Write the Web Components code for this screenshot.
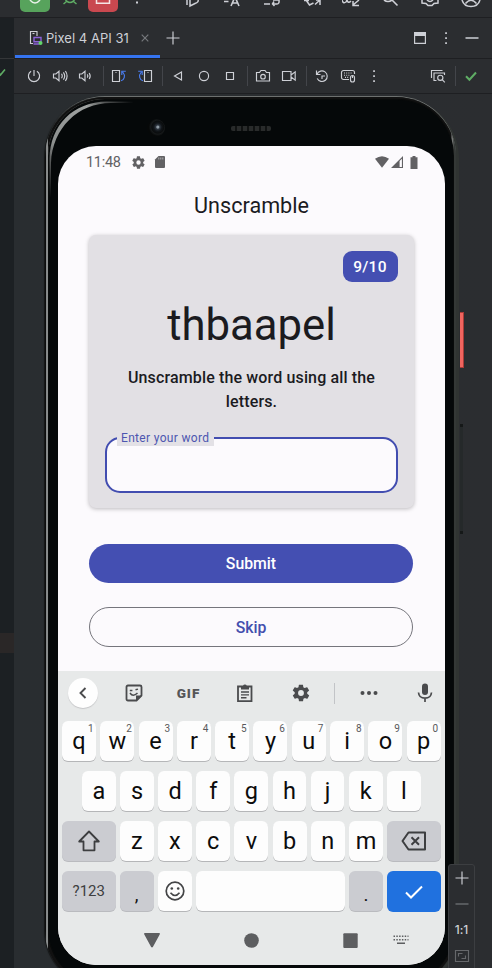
<!DOCTYPE html>
<html lang="en">
<head>
<meta charset="utf-8">
<title>Pixel 4 API 31</title>
<style>
html,body{margin:0;height:100%;background:#2b2d30;overflow:hidden}
body{font-family:Roboto,"Liberation Sans",sans-serif}
</style>
</head>
<body>
<emulator-window></emulator-window>
<script>
const s = (w,h,body)=>`<svg width="${w}" height="${h}" viewBox="0 0 ${w} ${h}" fill="none" stroke="currentColor" stroke-width="1.15">${body}</svg>`;
const gear = 'M19.4 13c0-.3.1-.6.1-1s0-.7-.1-1l2.1-1.6c.2-.1.2-.4.1-.6l-2-3.5c-.1-.2-.4-.3-.6-.2l-2.5 1c-.5-.4-1.1-.7-1.7-1l-.4-2.6c0-.3-.2-.5-.5-.5h-4c-.2 0-.4.2-.5.4l-.4 2.7c-.6.2-1.1.6-1.7 1l-2.4-1c-.3-.1-.5 0-.7.2l-2 3.5c-.1.2 0 .5.2.6L4.500 11c0 .3-.1.700-.1 1s0 .7.1 1l-2.1 1.600c-.2.2-.3.400-.1.700l2 3.400c.1.300.4.400.6.300l2.500-1c.5.400 1.100.700 1.700 1l.4 2.600c0 .3.2.400.5.400h4c.2 0 .5-.2.5-.4l.4-2.600c.6-.3 1.100-.6 1.700-1l2.500 1c.2.1.5 0 .6-.2l2-3.500c.1-.2.1-.5-.1-.6zM12 15.500a3.500 3.500 0 1 1 0-7 3.500 3.500 0 0 1 0 7z';
const ICONS = {
  power:s(16,16,'<path d="M8 2v6M5.100 3.300a5.600 5.600 0 1 0 5.800 0"/>'),
  volup:s(16,16,'<path d="M1.500 6v4h2.300L7 12.700V3.300L3.800 6zM9.500 5.800q1.500 2.200 0 4.400M11.400 4.300q2.600 3.700 0 7.400M13.400 3q3.400 5 0 10"/>'),
  voldown:s(16,16,'<path d="M2.500 6v4h2.300L8 12.700V3.300L4.800 6zM10.300 6.300q1.200 1.700 0 3.400M12.200 5q2 3 0 6"/>'),
  rotl:s(16,16,'<path d="M1.500 2.500h7v11h-7zM4.500 4.500h1"/><path stroke="#4a7df0" d="M10 12.800c3.500-.8 4.700-5.300 1.700-8.800M10.800 7V3.200h4"/>'),
  rotr:s(16,16,'<path d="M7.500 2.500h7v11h-7zM10.500 4.500h1"/><path stroke="#4a7df0" d="M6 12.800C2.500 12 1.300 7.500 4.300 4M5.200 7V3.200h-4"/>'),
  back:s(16,16,'<path d="M11.500 4v8L4.500 8z"/>'),
  home:s(16,16,'<circle cx="8" cy="8" r="4.600"/>'),
  recent:s(16,16,'<path d="M4.500 4.500h7v7h-7z"/>'),
  camera:s(16,16,'<path d="M1.500 4.500h3l1.500-2h4l1.500 2h3v8.500h-13z"/><circle cx="8" cy="8.700" r="2.300"/>'),
  video:s(16,16,'<path d="M1.500 3.500h8.500v9H1.500zM10 7l4.200-3.200v8.400L10 9"/>'),
  history:s(16,16,'<path d="M2.500 2.500v4h4M3 6.200a5.300 5.300 0 1 1 .2 4.400M8 11V8h3"/>'),
  keymouse:s(16,16,'<path d="M9 11.500H3.500a2 2 0 0 1-2-2v-5a2 2 0 0 1 2-2h9a2 2 0 0 1 2 2V6"/><path stroke-dasharray="1 1.200" d="M4 5h8.500M4 7.200h6M5 9.400h4"/><rect x="10.500" y="7.500" width="4" height="6.500" rx="2"/><path d="M12.500 8v2"/>'),
  dots:s(16,16,'<path fill="currentColor" stroke="none" d="M7.200 2.200h1.700v1.700H7.200zM7.200 7.200h1.700v1.700H7.200zM7.200 12.200h1.700v1.700H7.200z"/>'),
  inspect:s(16,16,'<path d="M1.500 10V2.500h11M6.500 12.500H4v-7.500h10.500V7"/><circle cx="10.300" cy="9.800" r="2.600"/><path d="M12.200 11.700l2.600 2.600"/>'),
  check:s(16,16,'<path stroke="#5fad65" stroke-width="2" d="M3 8.300l3.400 3.400L13 4.500"/>'),
  device:s(16,16,'<path d="M5 13.500H2.500v-12H9V6"/><path d="M4.500 3.500h2"/><path stroke="#8c62d8" stroke-width="1.400" d="M6 7.500h7v4.200H6zM5.500 14h6"/><circle cx="12.500" cy="13" r="2" fill="#62d66a" stroke="none"/>'),
  close:s(16,16,'<path stroke="#77797d" d="M4.700 4.700l6.600 6.600M11.300 4.700l-6.600 6.600"/>'),
  plus:s(16,16,'<path d="M8 1.500v13M1.500 8h13"/>'),
  windowed:s(16,16,'<path fill="currentColor" stroke="none" d="M2 2h12v4H2z"/><path d="M2.600 3h10.800v10.400H2.600z"/>'),
  minus:s(16,16,'<path stroke-width="1.500" d="M1.500 8h13"/>'),
  fit:s(16,16,'<path stroke="#66686b" d="M1.500 2.500h13v11h-13zM4.500 8.500V5.500h4M11.500 7.500v3h-4"/>'),
  /* top-bar glyphs, of which only the lower edge is visible */
  run:s(30,12,'<path fill="#57a35c" stroke="none" d="M0 0h30v7a5 5 0 0 1-5 5H5a5 5 0 0 1-5-5z"/><path stroke="#e8f0e8" stroke-width="1.500" d="M10 0q5 6 10 0"/>'),
  stop:s(30,12,'<path fill="#c9484f" stroke="none" d="M0 0h30v7a5 5 0 0 1-5 5H5a5 5 0 0 1-5-5z"/><path stroke="#f5e5e5" stroke-width="1.500" d="M8.500 0v3.200h13V0"/>'),
  bug:s(16,8,'<path stroke="#5fad65" stroke-width="1.500" d="M3.500 0q4.500 5 9 0M1.500 4l3-2.500M14.500 4l-3-2.500"/>'),
  tdot:s(16,8,'<path stroke="none" fill="currentColor" d="M7 1.500h2v2H7z"/>'),
  tplay:s(16,8,'<path stroke-width="1.500" d="M2 0v5M5 0v6l5-2.500q4-1.500 3-3.500M5 6V0"/>'),
  trans:s(16,8,'<path stroke-width="1.600" d="M0 1.500h4.500M7 6l3.500-8h1L15 6M8.500 3h5"/>'),
  wrap:s(16,8,'<path stroke-width="1.500" d="M0 4h6M9 4h4q2.500 0 2-4H9M10 1.500L8.500 4l2 2"/>'),
  swap:s(18,8,'<path stroke-width="1.500" d="M0 .5h5M2 0l3.500 5 4-2M11 4.500L16 0M16 5V0h-4"/>'),
  pull:s(18,8,'<path stroke-width="1.500" d="M0 0q1 4 4 2l1-2q1 4 4 1M17 0l-6 5M11 1v4.500h6"/>'),
  search:s(16,8,'<path stroke-width="1.600" d="M1 0q4 3 8 0M9 0l5.500 5.500"/>'),
  cog:s(18,8,'<path stroke-width="1.500" d="M1 0v3l4 .5L7 5.500h4L13 3.500l4-.5V0M6 0q3 3 6 0"/>'),
  user:s(20,8,'<path stroke-width="1.500" d="M1 0q2 6.500 9 6.500T19 0M4.500 3.500Q10-3 15.500 3.500"/>'),
  /* android glyphs */
  gear:`<svg width="100%" height="100%" viewBox="0 0 24 24" fill="currentColor"><path fill-rule="evenodd" d="${gear}"/></svg>`,
  sd:s(12,14,'<path fill="currentColor" stroke="none" d="M4.500 1H10q1 0 1 1v10q0 1-1 1H2q-1 0-1-1V4.500z"/><path stroke="#fcfafd" stroke-width=".5" d="M4.800 2.500v2M6.800 2.500v2M8.800 2.500v2"/>'),
  wifi:s(14,12,'<path fill="currentColor" stroke="none" d="M0 2.800Q7-2.300 14 2.800L7 11.700z"/>'),
  signal:s(12,12,'<path fill="currentColor" stroke="none" d="M0 12L12 0v12zM8.600 5v6h2.300V2.800z" fill-rule="evenodd"/>'),
  battery:s(8,13,'<path fill="currentColor" stroke="none" d="M2.500 0h3v1.200H7.500V13H.5V1.200h2z"/>'),
  chev:s(10,14,'<path stroke-width="1.900" d="M7.500 2L2.500 7l5 5"/>'),
  sticker:s(18,18,'<path stroke-width="1.800" stroke-linejoin="round" d="M3 1.500h12q1.500 0 1.500 1.500v8.500l-5 5H3Q1.500 16.500 1.500 15V3Q1.500 1.500 3 1.500z"/><path stroke="none" fill="currentColor" d="M11 17v-5.500h6z"/><path stroke-width="1.500" d="M4.800 6.500h2.600M10.500 5.800l2.500-.7M5 9q3 4.500 7.500 0"/>'),
  clip:s(18,20,'<path stroke-width="1.800" d="M2 3.500h13.500v14.700H2z"/><path fill="currentColor" stroke="none" d="M5 3h2a2 2 0 0 1 3.800 0H13v3.500H5z"/><path stroke-width="1.400" d="M5 9h8M5 11.900h8M5 14.800h5.500"/>'),
  more:s(18,6,'<g fill="currentColor" stroke="none"><circle cx="2.500" cy="3" r="2"/><circle cx="9" cy="3" r="2"/><circle cx="15.500" cy="3" r="2"/></g>'),
  mic:s(16,20,'<rect x="5" y="0.500" width="6" height="11.500" rx="3" fill="currentColor" stroke="none"/><path stroke-width="1.700" d="M1.500 9.500q.5 5.700 6.500 5.700t6.500-5.700M8 15v4"/>'),
  shift:s(24,22,'<path stroke-width="1.800" stroke-linejoin="round" d="M12 1.500L2.200 11.500H6.500v8.800h11v-8.800h4.300z"/>'),
  bksp:s(26,20,'<path stroke-width="2" stroke-linejoin="round" d="M7.500 1.500H24v17H7.500L1.500 10z"/><path stroke-width="2" d="M10.500 6.200l7.500 7.500M18 6.200l-7.500 7.500"/>'),
  smile:s(20,20,'<circle cx="10" cy="10" r="8.800" stroke-width="1.700"/><g fill="currentColor" stroke="none"><circle cx="6.800" cy="7.500" r="1.300"/><circle cx="13.200" cy="7.500" r="1.300"/></g><path stroke-width="1.600" d="M5.500 11.800q4.500 5.500 9 0"/>'),
  enter:s(18,14,'<path stroke="#fff" stroke-width="2" d="M1 7.500l5 5L17 1.500"/>'),
  navback:s(16,15,'<path fill="currentColor" stroke="none" d="M1 0h14q1.500 0 .7 1.400L9 13.800q-1 1.400-2 0L.3 1.400Q-.5 0 1 0z"/>'),
  navhome:s(15,15,'<circle cx="7.500" cy="7.500" r="7.300" fill="currentColor" stroke="none"/>'),
  navrec:s(15,15,'<rect x=".3" y=".3" width="14.400" height="14.700" rx="1" fill="currentColor" stroke="none"/>'),
  navkbd:s(16,10,'<path stroke-width="1.500" stroke-dasharray="1.500 1.300" d="M.5 1.200h15M.5 4.700h15"/><path stroke-width="1.600" d="M4 8.300h8"/>')
};
function def(name, css, html){
  customElements.define(name, class extends HTMLElement{
    constructor(){
      super();
      const t=document.createElement('template');
      t.innerHTML=`<style>*{box-sizing:border-box}svg{display:block}${css}</style>${html}`;
      this.attachShadow({mode:'open'}).appendChild(t.content.cloneNode(true));
    }
  });
}
const icon=(n,st='')=>`<ui-icon name="${n}" style="${st}"></ui-icon>`;
customElements.define('ui-icon', class extends HTMLElement{
  connectedCallback(){
    if(this.shadowRoot) return;
    this.attachShadow({mode:'open'}).innerHTML='<style>:host{display:block;flex:none}svg{display:block;overflow:hidden}</style>'+ICONS[this.getAttribute('name')];
  }
});

def('ide-topbar',`:host{display:grid;grid-template-columns:20px 30px 7px 26px 5px 30px 38px 43px 38px 40px 38px 42px 39px 38px 48px;
  height:18px;border-bottom:1px solid #1e1f22;color:#ced0d6;background:#2b2d30;justify-items:center;align-items:start}`,
  `<i></i>${icon('run')}<i></i>${icon('bug')}<i></i>${icon('stop')}${icon('tdot')}${icon('tplay','margin-left:30px')}${icon('trans','margin-left:28px')}${icon('wrap','margin-left:29px')}${icon('swap','margin-left:34px')}${icon('pull','margin-left:29px')}${icon('search','margin-left:29px')}${icon('cog','margin-left:30px')}${icon('user','margin-left:26px')}`);

def('ide-tabbar',`:host{display:flex;height:41px;border-bottom:1px solid #1e1f22;color:#ced0d6;align-items:stretch}
 .tab{width:145px;margin-left:1px;display:flex;align-items:center;border-bottom:3px solid #3574f0;padding:2px 0 0 13px;font:13px Inter,sans-serif;letter-spacing:.03px}
 .tab span{margin-left:2px;flex:1;white-space:nowrap}
 .right{margin-left:auto;display:flex;align-items:center;gap:10px;padding-right:12px}`,
 `<div class="tab">${icon('device')}<span>Pixel 4 API 31</span>${icon('close','margin-right:7px')}</div>${icon('plus','margin:12px 0 0 5px')}
 <div class="right">${icon('windowed')}${icon('dots')}${icon('minus')}</div>`);

def('ide-toolbar',`:host{display:flex;height:35px;border-bottom:1px solid #1e1f22;color:#ced0d6;align-items:center;gap:10px;padding:0 13px 0 12px}
 i{width:1px;height:20px;background:#43454a;margin:0 -3px 0 -1px}b{flex:1}`,
 ['power','volup','voldown','|','rotl','rotr','|','back','home','recent','|','camera','video','|','history','keymouse','dots','_','inspect','|','check'].map(n=>n==='|'?'<i></i>':n==='_'?'<b></b>':icon(n,n==='voldown'?'transform:translateX(-1px)':'')).join(''));

def('zoom-panel',`:host{display:flex;flex-direction:column;align-items:center;width:27px;height:110px;background:#2b2d30;border:1px solid #3c3e41;color:#ced0d6;
 font:500 12px Inter,sans-serif;padding-top:5px;gap:10px;border-radius:3px}span{line-height:16px;letter-spacing:-.1px}`,
 `${icon('plus')}${icon('minus','color:#66686b')}<span>1:1</span>${icon('fit')}`);

def('phone-frame',`:host{display:block;position:relative;width:411px;height:890px}
 .rim{height:100%;border-radius:60px 60px 56px 56px;background:linear-gradient(90deg,#0b0c0c 0,#0b0c0c 1px,#858888 1.500px,#8a8d8d 2.500px,#111 3.500px,#111 405px,#111 406px,#858786 407px,#656866 408px,#343836 409px,#343836 411px);padding:2px 3px 3px 3px;box-shadow:-1px 0 1px #141616,0 -1px 0 #777b79,3px 1px 0 #303432}
 .glint{height:100%;border-radius:57px 57px 54px 54px;background:linear-gradient(115deg,#8d908f 0,#6b6d6c 60px,#2b2c2c 110px,#050707 160px);padding:1px 0 0 1px}
 .body{height:100%;border-radius:56px 56px 54px 54px;background:#050809;padding:46px 6px 0 9px;box-shadow:0 0 0 1px #090b0b}
 .shine{position:absolute;left:0;top:0}
 .top{position:absolute;left:102px;top:20px;width:130px;height:22px;display:flex;align-items:center;justify-content:space-between}
 .lens{width:18px;height:18px;border-radius:50%;background:radial-gradient(circle at 60% 45%,#8e9aa3 0 1px,#303842 2px,#111519 4px,#0a0c0d 6px,#16191a 7px,#060808 9px)}
 .spk{width:40px;height:5px;margin:0 6px 0 0;border-radius:2px;background:repeating-linear-gradient(90deg,#292b2b 0 4px,#101212 4px 6px)}
 .screen{width:387px;height:819px;border-radius:38px;overflow:hidden;background:#fcfafd}
 .pw{position:absolute;left:415px;top:215px;width:4px;height:56px;background:#f0655f;border:solid #a93b38;border-width:1px 1px 1px 0}
 .vol{position:absolute;left:415px;top:327px;width:3px;height:110px;background:#25292a;border:solid #151818;border-width:3px 0}`,
 `<div class="rim"><div class="glint"><div class="body"><div class="screen"><slot></slot></div></div></div></div>
 <svg class="shine" width="90" height="110"><defs><linearGradient id="g" x1="0" y1="1" x2="1" y2="0"><stop offset="0" stop-color="#777" stop-opacity="0"/><stop offset=".3" stop-color="#8c8f8e"/><stop offset=".7" stop-color="#a0a3a2"/><stop offset="1" stop-color="#777" stop-opacity="0"/></linearGradient></defs><path fill="url(#g)" d="M4.500 100V62C5 28 28 5 62 4.500H88V6H66C33 6 7.500 31 6 66V100z"/></svg>
 <div class="top"><div class="lens"></div><div class="spk"></div></div><div class="pw"></div><div class="vol"></div>`);

def('status-bar',`:host{display:flex;align-items:center;height:31px;padding:1px 27px 0 28px;color:#626164;font-size:14.500px;box-sizing:border-box}
 span{width:45px;letter-spacing:-.3px}b{flex:1}`,
 `<span>11:48</span>${icon('gear','width:15px;height:15px;margin-right:8px')}${icon('sd')}<b></b>${icon('wifi')}${icon('signal','margin:0 7px 0 2px')}${icon('battery')}`);

def('score-badge',`:host{display:flex;width:55px;height:31px;border-radius:9px;background:#444fb2;color:#fff;font:500 15.500px Roboto,sans-serif;align-items:center;justify-content:center;align-self:flex-end;letter-spacing:.25px;padding-right:1px;box-sizing:border-box}`,`<slot></slot>`);

def('word-field',`:host{display:block;position:relative;width:293px;height:56px;border:2px solid #424db0;border-radius:15px;background:#fcfafd;box-sizing:border-box}
 label{position:absolute;left:10px;top:-8px;width:97px;height:15px;padding-left:4px;background:#e3e1e6;color:#4d56b0;font-size:12px;line-height:15px;letter-spacing:.33px;white-space:nowrap}`,
 `<label><slot></slot></label>`);

def('game-card',`:host{display:flex;flex-direction:column;align-items:center;width:325px;height:273px;padding:16px 16px 0;border-radius:7px;background:#e2e0e4;box-shadow:0 1px 4px rgba(0,0,0,.26);color:#1b1b1f;box-sizing:border-box}
 .word{font-size:43.700px;line-height:52px;margin-top:17px}
 p{margin:15px 0 23px;font-weight:500;font-size:16px;line-height:24px;letter-spacing:.14px;text-align:center;width:270px}`,
 `<score-badge>9/10</score-badge><div class="word"><slot name="word"></slot></div><p><slot name="hint"></slot></p><word-field>Enter your word</word-field>`);

def('pill-button',`:host{display:flex;width:324px;height:39px;border-radius:20px;background:#444fb2;color:#fff;font-weight:500;font-size:15.800px;align-items:center;justify-content:center;box-sizing:border-box}
 :host([outlined]){background:none;border:1px solid #75757c;color:#444fae;height:40px}`,`<slot></slot>`);

def('unscramble-app',`:host{display:flex;flex-direction:column;align-items:center;height:494px}
 h1{margin:15px 0 16px;font-weight:400;font-size:21.600px;line-height:27px;color:#1b1b1f}`,
 `<h1>Unscramble</h1><game-card><span slot="word">thbaapel</span><span slot="hint">Unscramble the word using all the letters.</span></game-card><pill-button style="margin:36px 1px 24px 0">Submit</pill-button><pill-button outlined style="margin-right:1px">Skip</pill-button>`);

def('key-cap',`:host{display:flex;position:relative;flex:1 1 0;height:40px;border-radius:6px;background:#fdfdfd;box-shadow:0 1px 0 #b5b6b8;color:#0c0c0c;font-size:23.500px;line-height:38px;align-items:center;justify-content:center;box-sizing:border-box}
 :host([dark]){background:#cbccd1;box-shadow:0 1px 0 #babbbf;color:#3d3e40}
 :host([blue]){background:#2071df;box-shadow:none;height:41px}
 sup{position:absolute;right:2.500px;top:2px;font-size:10px;line-height:11px;color:#58595b}`,
 `<slot></slot><sup><slot name="alt"></slot></sup>`);

const key=(c,alt)=>`<key-cap>${c}${alt?`<span slot="alt">${alt}</span>`:''}</key-cap>`;
def('soft-keyboard',`:host{display:block;height:294px;background:#e7e9e9;color:#4a4b4d;padding:0 4.300px 0 4px;box-sizing:border-box}
 .tools{display:grid;grid-template-columns:42px 59px 51px 61px 52px 15px 54px 58px;height:44px;align-items:center;justify-items:center}
 .bk{width:30px;height:30px;border-radius:50%;background:#fefefe;box-shadow:0 1px 1px #c5c6c8;display:grid;place-items:center}
 .gif{font:900 13.500px Roboto,sans-serif;letter-spacing:1px;color:#555658}
 .bar{width:1px;height:21px;background:#c2c4c7}
 .row{display:flex;gap:4.300px;height:40px;margin-bottom:10px}.r1{margin-top:6px}.mid{padding:0 20px}
 .w{flex:0 0 53.500px}.k{flex:0 0 33.800px}
 .nav{display:grid;height:44px;margin-top:-4px;color:#5d5e60;align-items:center;grid-template-columns:82px 100px 99px 84px;padding-top:2px}
 `,
 `<div class="tools"><div class="bk">${icon('chev')}</div>${icon('sticker')}<span class="gif">GIF</span>${icon('clip')}${icon('gear','width:20px;height:20px')}<div class="bar"></div>${icon('more')}${icon('mic')}</div>
 <div class="row r1">${[...'qwertyuiop'].map((c,i)=>key(c,String((i+1)%10))).join('')}</div>
 <div class="row mid">${[...'asdfghjkl'].map(c=>key(c)).join('')}</div>
 <div class="row"><key-cap dark class="w">${icon('shift')}</key-cap>${[...'zxcvbnm'].map(c=>key(c)).join('')}<key-cap dark class="w">${icon('bksp')}</key-cap></div>
 <div class="row"><key-cap dark class="w"><span style="font-size:15px">?123</span></key-cap><key-cap dark class="k"><span style="font-size:19px;color:#111;padding-top:7px">,</span></key-cap><key-cap class="k"><span style="color:#434446">${icon('smile')}</span></key-cap><key-cap></key-cap><key-cap dark class="k"><span style="font-size:19px;color:#111;padding-top:7px">.</span></key-cap><key-cap blue class="w">${icon('enter')}</key-cap></div>
 <div class="nav">${icon('navback','margin-left:82px')}${icon('navhome','margin-left:100px')}${icon('navrec','margin-left:99px')}${icon('navkbd','margin-left:50px')}</div>`);

def('editor-strip',`:host{display:flex;flex-direction:column;width:14px;background:#1c2023;flex:none}
 .ed{height:41px;border-bottom:1px solid #343638}.ck{height:574px;padding-top:9px}.patch{height:20px;background:#2a2727}`,
 `<div class="ed"></div><div class="ck"><svg width="8" height="10" fill="none" stroke="#5fad65" stroke-width="1.600"><path d="M-1 5l1.500 2L5 1.500"/></svg></div><div class="patch"></div>`);

def('emulator-window',`:host{display:flex;flex-direction:column;width:492px;height:968px;overflow:hidden;background:#2b2d30;position:relative}
 .main{display:flex;flex:1;min-height:0}.panel{flex:1;min-width:0;display:flex;flex-direction:column}
 .stage{flex:1;min-height:0;overflow:hidden;padding:3px 0 0 31px;background:linear-gradient(90deg,#292d30,#2b2d30)}
 zoom-panel{position:absolute;left:448px;top:864px}`,
 `<ide-topbar></ide-topbar><div class="main"><editor-strip></editor-strip><div class="panel"><ide-tabbar></ide-tabbar><ide-toolbar></ide-toolbar>
 <div class="stage"><phone-frame><status-bar></status-bar><unscramble-app></unscramble-app><soft-keyboard></soft-keyboard></phone-frame></div></div></div><zoom-panel></zoom-panel>`);
</script>
</body>
</html>
